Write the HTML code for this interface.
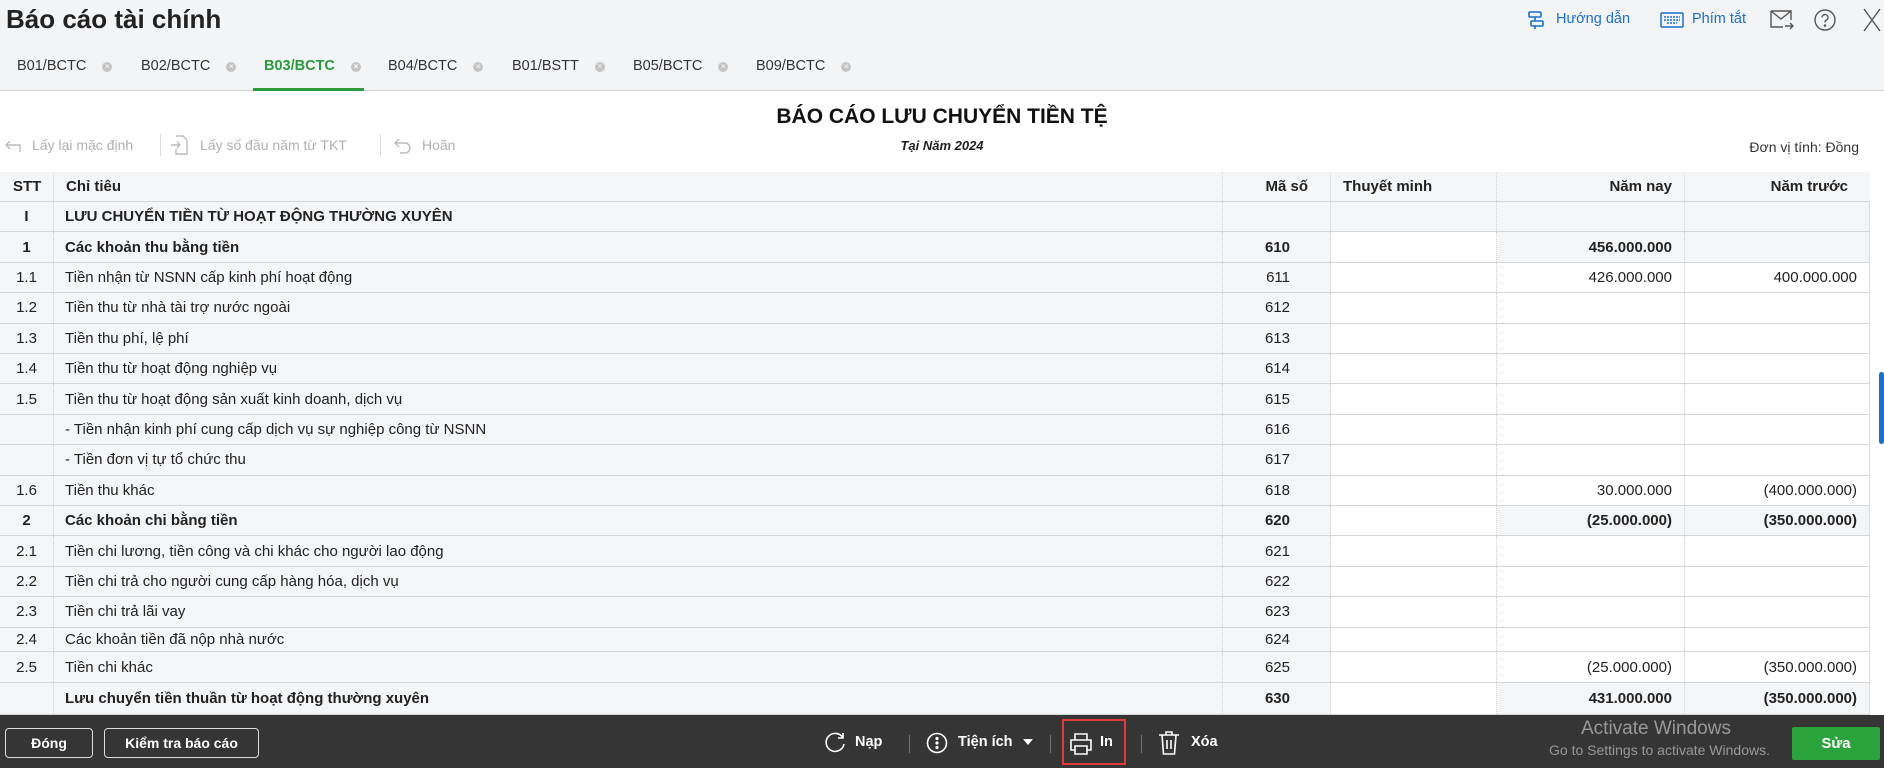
<!DOCTYPE html>
<html><head><meta charset="utf-8">
<style>
*{box-sizing:border-box;margin:0;padding:0}
body{width:1884px;height:768px;overflow:hidden;background:#fff;font-family:"Liberation Sans",sans-serif;color:#222;position:relative;font-size:15px}
.a{position:absolute;white-space:nowrap}
.top{position:absolute;left:0;top:0;width:1884px;height:91px;background:#f3f4f6;border-bottom:1px solid #cfd2d6}
.tab{position:absolute;top:58px;font-size:14.5px;color:#333}
.tab i{font-style:normal;display:inline-block;width:10px;height:10px;border-radius:50%;background:#c4c4c4;margin-left:16px;vertical-align:1px;color:#fff;font-size:8px;line-height:10px;text-align:center}
.row{position:absolute;left:0;width:1870px;border-bottom:1px solid #d4d6d9}
.c{position:absolute;top:0;height:100%;display:flex;align-items:center;border-right:1px dotted #d0d0d0}
.g{background:#f4f5f7}
.b{font-weight:bold}
.fb{position:absolute;top:715px;left:0;width:1884px;height:53px;background:#353535}
.btn{position:absolute;top:13px;height:30px;border:1px solid #ddd;border-radius:4px;color:#fff;font-weight:bold;font-size:14px;display:flex;align-items:center;justify-content:center}
.ft{position:absolute;color:#fff;font-weight:bold;font-size:14.5px;top:19px}
.tb{position:absolute;top:137px;color:#b0b0b0;font-size:14px}
</style></head><body>
<div class="top">
 <div class="a b" style="left:6px;top:4px;font-size:26px;color:#222">Báo cáo tài chính</div>
 <svg class="a" style="left:1527px;top:10px" width="18" height="20" viewBox="0 0 18 20" fill="none" stroke="#1a6fc9" stroke-width="1.6"><rect x="2" y="2" width="12" height="5" rx="1"/><rect x="4" y="11" width="12" height="5" rx="1"/><path d="M8 7v4M8 16v3"/></svg>
 <div class="a" style="left:1556px;top:11px;color:#1a6fc9;font-size:14.5px">Hướng dẫn</div>
 <svg class="a" style="left:1660px;top:12px" width="24" height="16" viewBox="0 0 24 16" fill="none" stroke="#1a6fc9" stroke-width="1.5"><rect x="1" y="1" width="22" height="14" rx="1"/><path d="M4 5h16M4 8h16M7 11h10" stroke-dasharray="2 1"/></svg>
 <div class="a" style="left:1692px;top:11px;color:#1a6fc9;font-size:14.5px">Phím tắt</div>
 <svg class="a" style="left:1769px;top:8px" width="26" height="24" viewBox="0 0 26 24" fill="none" stroke="#555" stroke-width="1.4"><path d="M2 3h20v9M2 3v16h12M2 3l10 8 10-8M16 18h8M21 15l3 3-3 3"/></svg>
 <svg class="a" style="left:1813px;top:8px" width="24" height="24" viewBox="0 0 24 24" fill="none" stroke="#555" stroke-width="1.4"><circle cx="12" cy="12" r="10"/><path d="M9 9.5a3 3 0 1 1 4 2.8c-1 .4-1 1-1 2.2"/><circle cx="12" cy="17.5" r=".6" fill="#555"/></svg>
 <svg class="a" style="left:1862px;top:7px" width="20" height="26" viewBox="0 0 20 26" stroke="#555" stroke-width="1.4"><path d="M2 2l16 22M18 2L2 24"/></svg>
 <div class="tab" style="left:17px">B01/BCTC<i>×</i></div>
 <div class="tab" style="left:141px">B02/BCTC<i>×</i></div>
 <div class="tab" style="left:264px;color:#2a9a3c;font-weight:bold">B03/BCTC<i>×</i></div>
 <div class="tab" style="left:388px">B04/BCTC<i>×</i></div>
 <div class="tab" style="left:512px">B01/BSTT<i>×</i></div>
 <div class="tab" style="left:633px">B05/BCTC<i>×</i></div>
 <div class="tab" style="left:756px">B09/BCTC<i>×</i></div>
 <div class="a" style="left:253px;top:88px;width:111px;height:3px;background:#2a9a3c"></div>
</div>
<div class="a b" style="left:0;width:1884px;text-align:center;top:105px;font-size:21px;color:#111">BÁO CÁO LƯU CHUYỂN TIỀN TỆ</div>
<div class="a b" style="left:0;width:1884px;text-align:center;top:138px;font-size:13px;font-style:italic">Tại Năm 2024</div>
<div class="a" style="right:25px;top:139px;font-size:14px;color:#333">Đơn vị tính: Đồng</div>
<svg class="a" style="left:4px;top:138px" width="18" height="16" viewBox="0 0 18 16" fill="none" stroke="#bbb" stroke-width="1.4"><path d="M6 3L2 7l4 4M2 7h14v7"/></svg>
<div class="tb" style="left:32px">Lấy lại mặc định</div>
<div class="a" style="left:160px;top:134px;width:1px;height:22px;background:#ddd"></div>
<svg class="a" style="left:170px;top:135px" width="18" height="20" viewBox="0 0 18 20" fill="none" stroke="#bbb" stroke-width="1.4"><path d="M6 1h7l4 4v14H6v-5M1 10h9M7 7l3 3-3 3"/></svg>
<div class="tb" style="left:200px">Lấy số đầu năm từ TKT</div>
<div class="a" style="left:380px;top:134px;width:1px;height:22px;background:#ddd"></div>
<svg class="a" style="left:394px;top:137px" width="18" height="18" viewBox="0 0 18 18" fill="none" stroke="#bbb" stroke-width="1.4"><path d="M5 2L1 6l4 4M1 6h10a5 5 0 0 1 0 10H6"/></svg>
<div class="tb" style="left:422px">Hoãn</div>

<div class="row g" style="top:172px;height:30px">
 <div class="c b" style="left:0;width:54px;padding-left:13px">STT</div>
 <div class="c b" style="left:54px;width:1169px;padding-left:12px">Chỉ tiêu</div>
 <div class="c b" style="left:1223px;width:108px;justify-content:flex-end;padding-right:22px">Mã số</div>
 <div class="c b" style="left:1331px;width:166px;padding-left:12px">Thuyết minh</div>
 <div class="c b" style="left:1497px;width:188px;justify-content:flex-end;padding-right:12px">Năm nay</div>
 <div class="c b" style="left:1685px;width:185px;justify-content:flex-end;padding-right:22px;border-right:none">Năm trước</div>
</div>
<div id="rows"></div>
<div class="a" style="left:1879px;top:372px;width:5px;height:72px;background:#1a6fc9;border-radius:3px"></div>

<div class="fb">
 <div class="btn" style="left:5px;width:88px">Đóng</div>
 <div class="btn" style="left:104px;width:155px">Kiểm tra báo cáo</div>
 <svg class="a" style="left:823px;top:16px" width="24" height="24" viewBox="0 0 24 24" fill="none" stroke="#fff" stroke-width="1.6"><path d="M20 7a9 9 0 1 0 1 6M20 2v5h-5"/></svg>
 <div class="ft" style="left:855px">Nạp</div>
 <div class="a" style="left:909px;top:20px;width:1px;height:18px;background:#777"></div>
 <svg class="a" style="left:926px;top:17px" width="22" height="22" viewBox="0 0 22 22" fill="none" stroke="#fff" stroke-width="1.6"><circle cx="11" cy="11" r="9.5"/><circle cx="11" cy="6.5" r=".8" fill="#fff"/><circle cx="11" cy="11" r=".8" fill="#fff"/><circle cx="11" cy="15.5" r=".8" fill="#fff"/></svg>
 <div class="ft" style="left:958px">Tiện ích</div>
 <div class="a" style="left:1023px;top:24px;width:0;height:0;border-left:5px solid transparent;border-right:5px solid transparent;border-top:6px solid #fff"></div>
 <div class="a" style="left:1050px;top:20px;width:1px;height:18px;background:#777"></div>
 <div class="a" style="left:1062px;top:4px;width:64px;height:46px;border:2px solid #e03a3a"></div>
 <svg class="a" style="left:1069px;top:17px" width="24" height="24" viewBox="0 0 24 24" fill="none" stroke="#fff" stroke-width="1.6"><path d="M6 8V2h12v6M6 18H2V8h20v10h-4M6 14h12v8H6z"/></svg>
 <div class="ft" style="left:1100px">In</div>
 <div class="a" style="left:1141px;top:20px;width:1px;height:18px;background:#777"></div>
 <svg class="a" style="left:1158px;top:15px" width="22" height="26" viewBox="0 0 22 26" fill="none" stroke="#fff" stroke-width="1.6"><path d="M1 5h20M8 5V2h6v3M4 5l1.5 19h11L18 5M9 10v9M13 10v9"/></svg>
 <div class="ft" style="left:1191px">Xóa</div>
 <div class="a" style="left:1581px;top:3px;color:#999;font-size:19px">Activate Windows</div>
 <div class="a" style="left:1549px;top:27px;color:#999;font-size:14px">Go to Settings to activate Windows.</div>
 <div class="a b" style="left:1792px;top:12px;width:88px;height:33px;background:#2aa33c;color:#fff;display:flex;align-items:center;justify-content:center;font-size:15px;border-radius:2px">Sửa</div>
</div>
<script>
var R=[
["I","LƯU CHUYỂN TIỀN TỪ HOẠT ĐỘNG THƯỜNG XUYÊN","","","",2],
["1","Các khoản thu bằng tiền","610","456.000.000","",1],
["1.1","Tiền nhận từ NSNN cấp kinh phí hoạt động","611","426.000.000","400.000.000",0],
["1.2","Tiền thu từ nhà tài trợ nước ngoài","612","","",0],
["1.3","Tiền thu phí, lệ phí","613","","",0],
["1.4","Tiền thu từ hoạt động nghiệp vụ","614","","",0],
["1.5","Tiền thu từ hoạt động sản xuất kinh doanh, dịch vụ","615","","",0],
["","- Tiền nhận kinh phí cung cấp dịch vụ sự nghiệp công từ NSNN","616","","",0],
["","- Tiền đơn vị tự tổ chức thu","617","","",0],
["1.6","Tiền thu khác","618","30.000.000","(400.000.000)",0],
["2","Các khoản chi bằng tiền","620","(25.000.000)","(350.000.000)",1],
["2.1","Tiền chi lương, tiền công và chi khác cho người lao động","621","","",0],
["2.2","Tiền chi trả cho người cung cấp hàng hóa, dịch vụ","622","","",0],
["2.3","Tiền chi trả lãi vay","623","","",0],
["2.4","Các khoản tiền đã nộp nhà nước","624","","",0],
["2.5","Tiền chi khác","625","(25.000.000)","(350.000.000)",0],
["","Lưu chuyển tiền thuần từ hoạt động thường xuyên","630","431.000.000","(350.000.000)",1]];
var tops=[],h=[];for(var i=0;i<14;i++){tops.push(202+i*30.4);h.push(30.4)}
tops.push(628);h.push(24);tops.push(652);h.push(31);tops.push(683);h.push(32);
var s="";R.forEach(function(r,i){var b=r[5]?" b":"";var vg=r[5]?" g":"";
s+='<div class="row" style="top:'+tops[i]+'px;height:'+h[i]+'px">'+
'<div class="c g'+(r[5]?" b":"")+'" style="left:0;width:54px;justify-content:center">'+r[0]+'</div>'+
'<div class="c g'+(r[5]?" b":"")+'" style="left:54px;width:1169px;padding-left:11px">'+r[1]+'</div>'+
'<div class="c g'+b+'" style="left:1223px;width:108px;justify-content:flex-end;padding-right:40px">'+r[2]+'</div>'+
'<div class="c'+(r[5]==2?" g":"")+'" style="left:1331px;width:166px"></div>'+
'<div class="c'+vg+b+'" style="left:1497px;width:188px;justify-content:flex-end;padding-right:12px">'+r[3]+'</div>'+
'<div class="c'+vg+b+'" style="left:1685px;width:185px;justify-content:flex-end;padding-right:12px;border-right:1px solid #ddd">'+r[4]+'</div></div>';});
document.getElementById("rows").innerHTML=s;
</script>
</body></html>
